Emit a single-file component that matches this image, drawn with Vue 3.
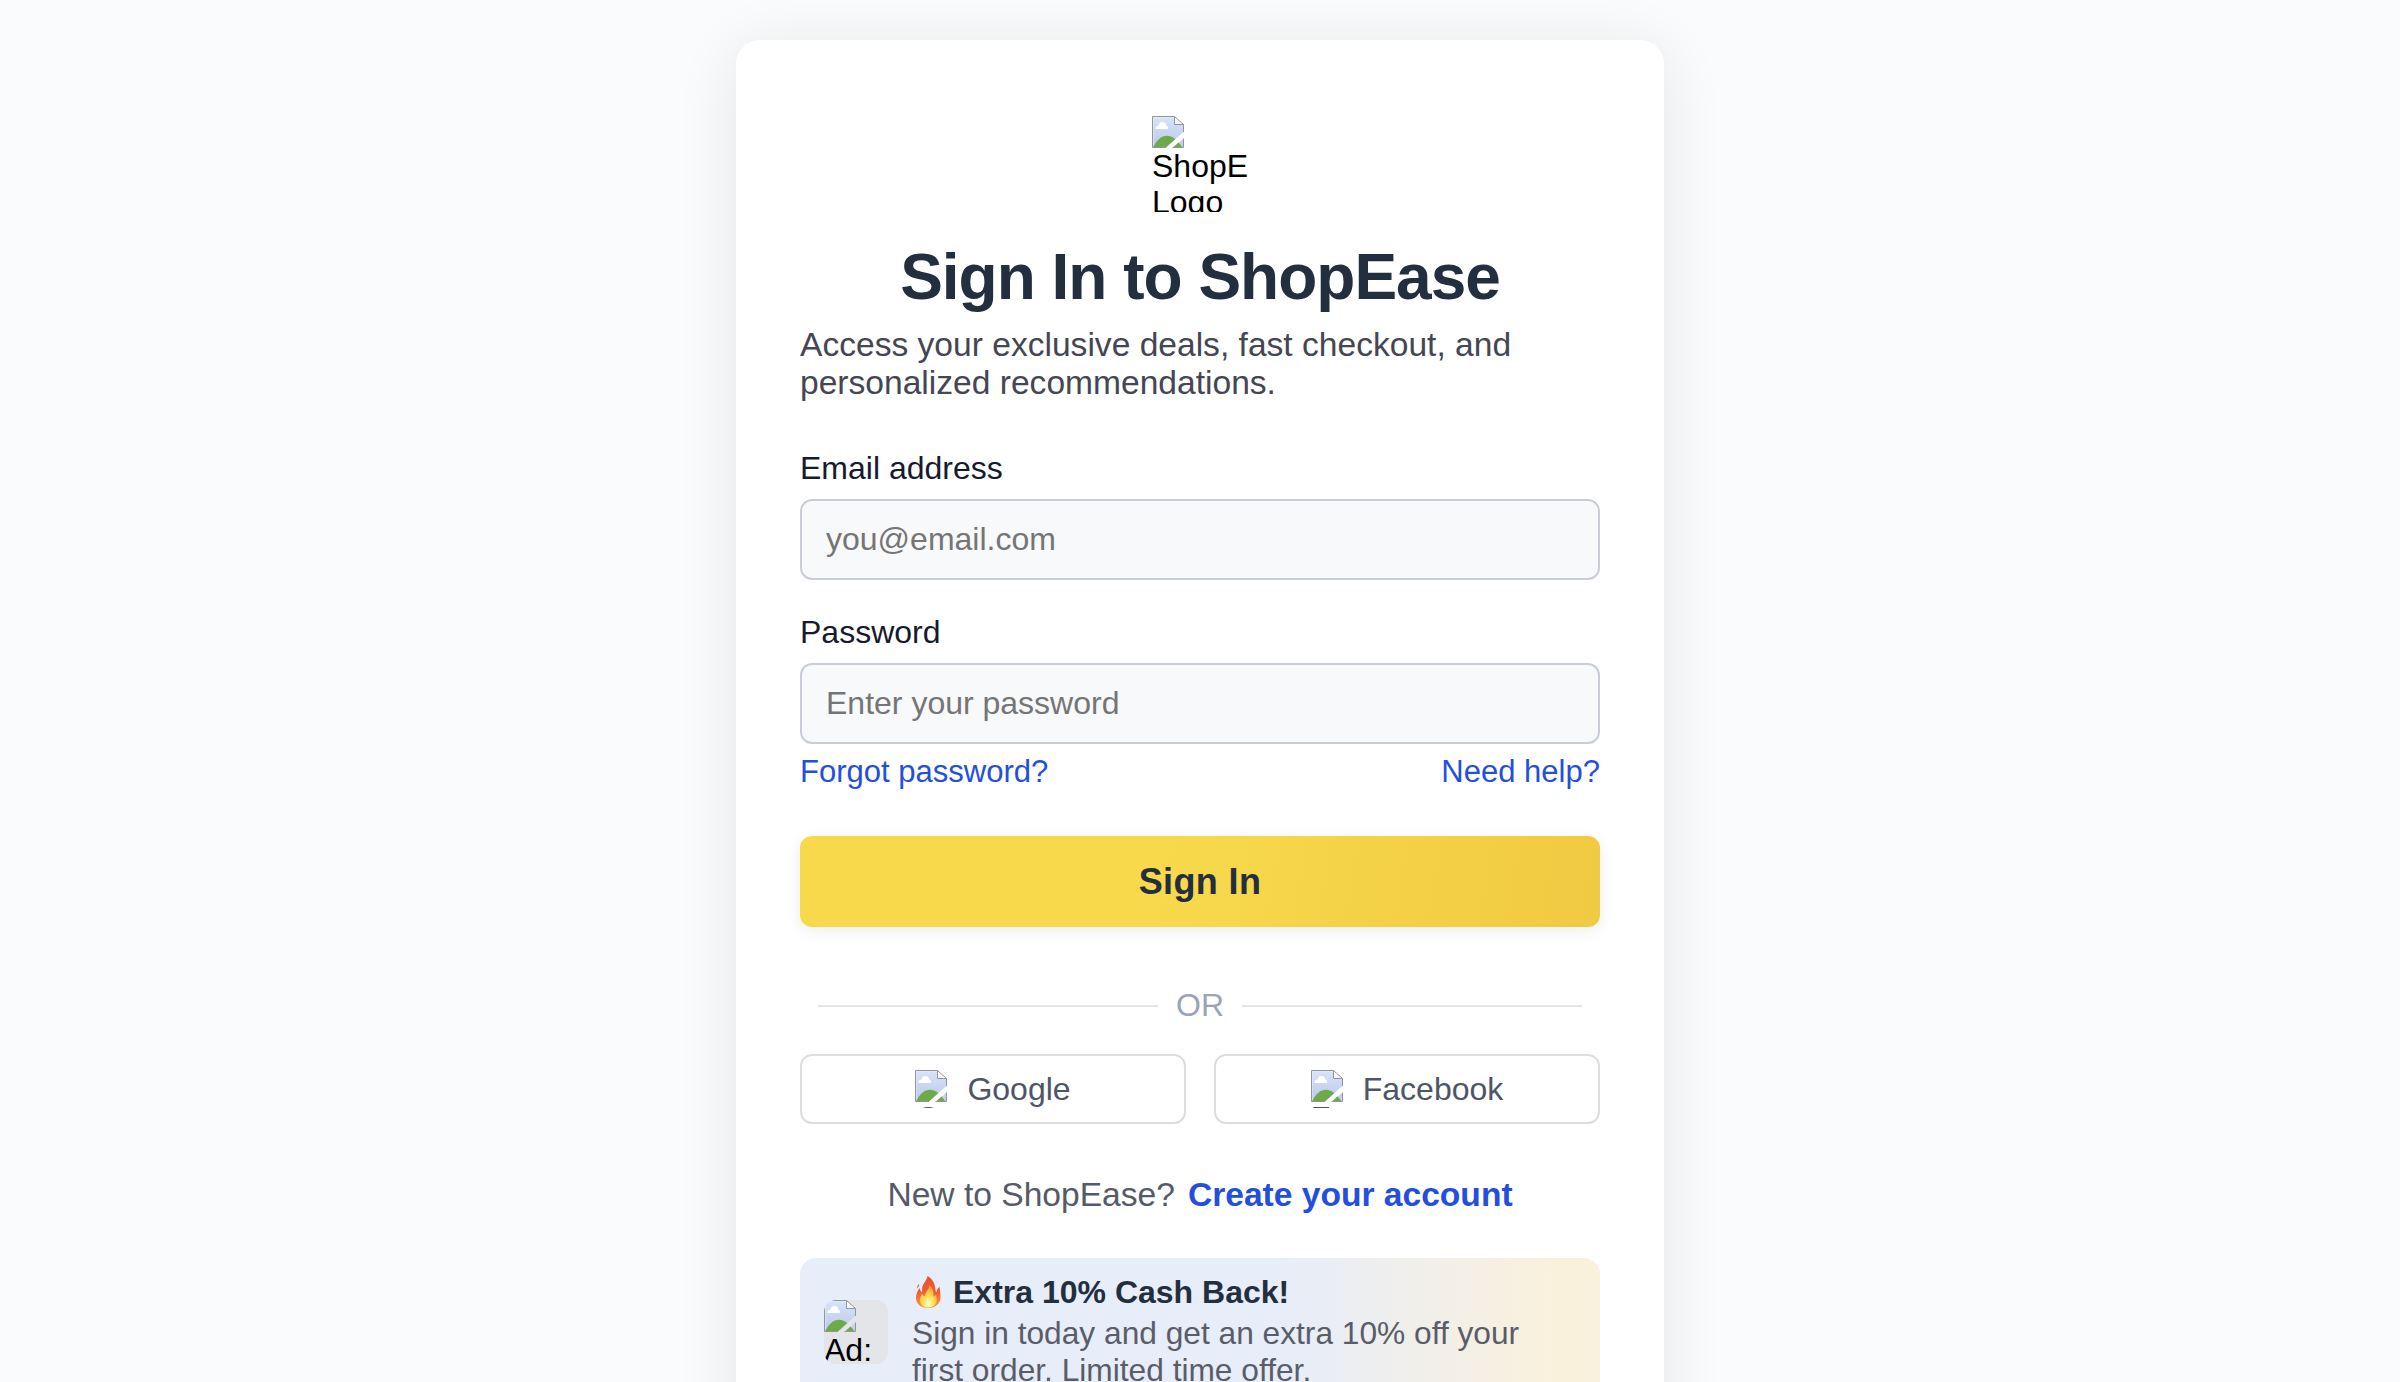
<script setup>
import { h } from 'vue'

const providers = ['Google', 'Facebook']

// Placeholder glyph for pictures that have not loaded
const BrokenImage = () =>
  h('svg', { viewBox: '0 0 32 32', width: 32, height: 32, style: 'display:block' }, [
    h('defs', [
      h('linearGradient', { id: 'sky', x1: 0, y1: 0, x2: 0, y2: 1 }, [
        h('stop', { offset: 0, 'stop-color': '#d6e3f9' }),
        h('stop', { offset: 1, 'stop-color': '#b9c8ea' }),
      ]),
    ]),
    h('path', { d: 'M.5 .5H22.500L31.500 9.500V16L13.500 31.500H.5Z', fill: '#e9effa' }),
    h('path', { d: 'M1.500 1.500H22V9H31V16.300L13.500 31.500H1.500Z', fill: 'url(#sky)' }),
    h('path', { d: 'M31.500 22.500V31.500H21Z', fill: '#c3d0ee' }),
    h('path', { d: 'M3.500 13C3 10.500 4.800 9.500 6.500 9.500C7 7 8.500 6 10.500 6C13 6 14 7.500 14.300 9.500C16 9.800 16.500 11.500 15.800 13Z', fill: '#fff' }),
    h('path', { d: 'M1 31.500C5 23.500 9.500 19.700 15 19.700C18 19.700 20.800 21 23.400 23L14 31.500Z', fill: '#6dab49' }),
    h('path', { d: 'M26.500 26.500C28.200 28.200 29.500 30 30.500 31.500H21Z', fill: '#6dab49' }),
    h('path', { d: 'M22.500 1L31 8.500H22.500Z', fill: '#fff' }),
    h('path', { d: 'M14 31.500H.5V.5H22.500L31.500 8.500V16M22.500 .5V8.500H31.500M31.500 22.500V31.500H20.500', fill: 'none', stroke: '#939598', 'stroke-width': 1 }),
  ])
</script>

<template>
  <main class="page">
    <section class="card">
      <div class="logo"><BrokenImage /><span>ShopEase Logo</span></div>
      <h1>Sign In to ShopEase</h1>
      <p class="subtitle">Access your exclusive deals, fast checkout, and personalized recommendations.</p>

      <form @submit.prevent>
        <label for="email">Email address</label>
        <input id="email" type="email" placeholder="you@email.com" />
        <label for="password">Password</label>
        <input id="password" type="password" placeholder="Enter your password" />
        <div class="links"><a>Forgot password?</a><a>Need help?</a></div>
        <button class="submit">Sign In</button>
      </form>

      <div class="divider">OR</div>

      <div class="socials">
        <button v-for="name in providers" :key="name" class="social">
          <span class="social-icon"><BrokenImage /><span>{{ name }}</span></span>
          <span>{{ name }}</span>
        </button>
      </div>

      <p class="create"><span>New to ShopEase?</span><a>Create your account</a></p>

      <aside class="promo">
        <div class="ad"><BrokenImage /><span>Ad:</span></div>
        <div class="promo-copy">
          <strong>
            <svg class="fire" viewBox="0 0 26 32" width="26" height="32">
              <defs>
                <linearGradient id="flame" x1="0" y1="0" x2="0" y2="1">
                  <stop offset="0" stop-color="#e8532f" />
                  <stop offset=".5" stop-color="#ef5b35" />
                  <stop offset="1" stop-color="#f9a33c" />
                </linearGradient>
                <radialGradient id="core" cx=".5" cy=".85" r=".75">
                  <stop offset="0" stop-color="#fffbd0" />
                  <stop offset=".45" stop-color="#fde457" />
                  <stop offset="1" stop-color="#f99b38" />
                </radialGradient>
              </defs>
              <path fill="url(#flame)" d="M12.500 0C12 4 8 7.500 7.200 11.500C6.900 13.500 7.300 15 7 16C5.500 15.500 5 13.500 5 12C2.500 14.500 1 18 1 21.500C1 28 6 32 13 32C20.500 32 25.300 27.500 25.500 21.500C25.700 17.500 24.500 14.500 24.800 11C22.500 12 21.800 14 21.500 16C20.800 15.700 20.500 14.500 20.300 12.500C19.800 7 17 2.500 12.500 0Z" />
              <path fill="#ef6b3c" d="M4 8C2.500 9.300 1.800 10.500 2 12C3.500 11.500 4.500 10 4 8Z" />
              <path fill="url(#core)" d="M14.500 9C15 12.500 10 15.500 9.800 20C8.500 20 7.800 18.800 7.500 17.500C5.500 19.500 4.500 22 5 25C5.700 29 8.500 31.500 13 31.500C18 31.500 21.500 28.500 21.700 24.500C21.800 22.500 21.200 20.500 21 19C20 19.300 19 20 18.500 21C18.500 16.500 18.500 12 14.500 9Z" />
            </svg>Extra 10% Cash Back!</strong>
          <p>Sign in today and get an extra 10% off your first order. Limited time offer.</p>
        </div>
      </aside>
    </section>
  </main>
</template>

<style>
body {
  background: #fafbfd;
  overflow: hidden;
}
</style>

<style scoped>
* {
  box-sizing: border-box;
}
.page {
  height: 1382px;
  overflow: hidden;
  padding-top: 40px;
  display: flex;
  justify-content: center;
  align-items: flex-start;
  font-family: "Liberation Sans", Arial, sans-serif;
  font-size: 32px;
  color: #000;
}
.card {
  width: 928px;
  height: 1500px;
  padding: 76px 64px 64px;
  background: #fff;
  border-radius: 24px;
  box-shadow: 0 8px 64px rgba(0, 0, 0, 0.09);
}
.logo {
  width: 96px;
  height: 96px;
  margin: 0 auto;
  overflow: hidden;
  line-height: 36px;
}
.logo span {
  display: block;
}
h1 {
  margin: 28px 0 0;
  font-size: 64px;
  line-height: 74px;
  letter-spacing: -1px;
  text-align: center;
  color: #232f3e;
}
.subtitle {
  margin: 12px 0 0;
  font-size: 33.6px;
  line-height: 38px;
  color: #444653;
}
form {
  margin-top: 48px;
}
label {
  display: block;
  line-height: 36px;
  margin-bottom: 13px;
  color: #161a2e;
}
input {
  display: block;
  width: 100%;
  height: 81px;
  margin-bottom: 34px;
  padding: 0 24px;
  border: 2px solid #c9cdd6;
  border-radius: 12px;
  background: #f8f9fb;
  font: inherit;
  outline: none;
}
input::placeholder {
  color: #757575;
  opacity: 1;
}
#password {
  margin-bottom: 0;
}
.links {
  display: flex;
  justify-content: space-between;
  margin-top: 10px;
  font-size: 31.04px;
  line-height: 36px;
}
a {
  color: #234fdc;
}
.submit {
  display: block;
  width: 100%;
  height: 91px;
  margin-top: 46px;
  padding: 0;
  border: 0;
  border-radius: 12px;
  background: linear-gradient(100deg, #f8d94c 45%, #f0ca42 100%);
  box-shadow: 0 4px 16px rgba(0, 0, 0, 0.07);
  font: bold 36px "Liberation Sans", Arial, sans-serif;
  letter-spacing: 0.36px;
  color: #232f3e;
}
.divider {
  display: flex;
  align-items: center;
  margin-top: 60px;
  line-height: 37px;
  color: #9aa3b8;
}
.divider::before,
.divider::after {
  content: "";
  flex: 1;
  height: 2px;
  margin: 0 18px;
  background: #e4e5ea;
}
.socials {
  display: flex;
  gap: 28px;
  margin-top: 30px;
}
.social {
  flex: 1;
  display: flex;
  align-items: center;
  justify-content: center;
  gap: 16px;
  height: 70px;
  padding: 0;
  border: 2px solid #dcddde;
  border-radius: 12px;
  background: #fff;
  font: inherit;
  color: #4e5566;
}
.social-icon {
  width: 36px;
  height: 38px;
  overflow: hidden;
  text-align: left;
  line-height: 33px;
}
.social-icon span {
  display: block;
}
.create {
  display: flex;
  justify-content: center;
  gap: 13px;
  margin: 52px 0 0;
  font-size: 33.6px;
  line-height: 38px;
  color: #555a68;
}
.create a {
  font-weight: bold;
}
.promo {
  display: flex;
  align-items: center;
  gap: 24px;
  height: 148px;
  margin-top: 44px;
  padding: 0 24px;
  border-radius: 16px;
  background: linear-gradient(90deg, #e7edf9 60%, #faf1dd 94%);
}
.ad {
  flex: none;
  width: 64px;
  height: 64px;
  overflow: hidden;
  border-radius: 12px;
  background: #e4e5e8;
  line-height: 36px;
}
.ad span {
  display: block;
}
.promo-copy {
  flex: 1;
  padding-bottom: 2px;
}
.promo strong {
  display: flex;
  align-items: center;
  line-height: 38px;
  color: #232f3e;
}
.fire {
  margin: 0 12px 0 3px;
}
.promo p {
  margin: 4px 0 0;
  font-size: 31.7px;
  line-height: 37px;
  color: #5a5d69;
}
</style>
